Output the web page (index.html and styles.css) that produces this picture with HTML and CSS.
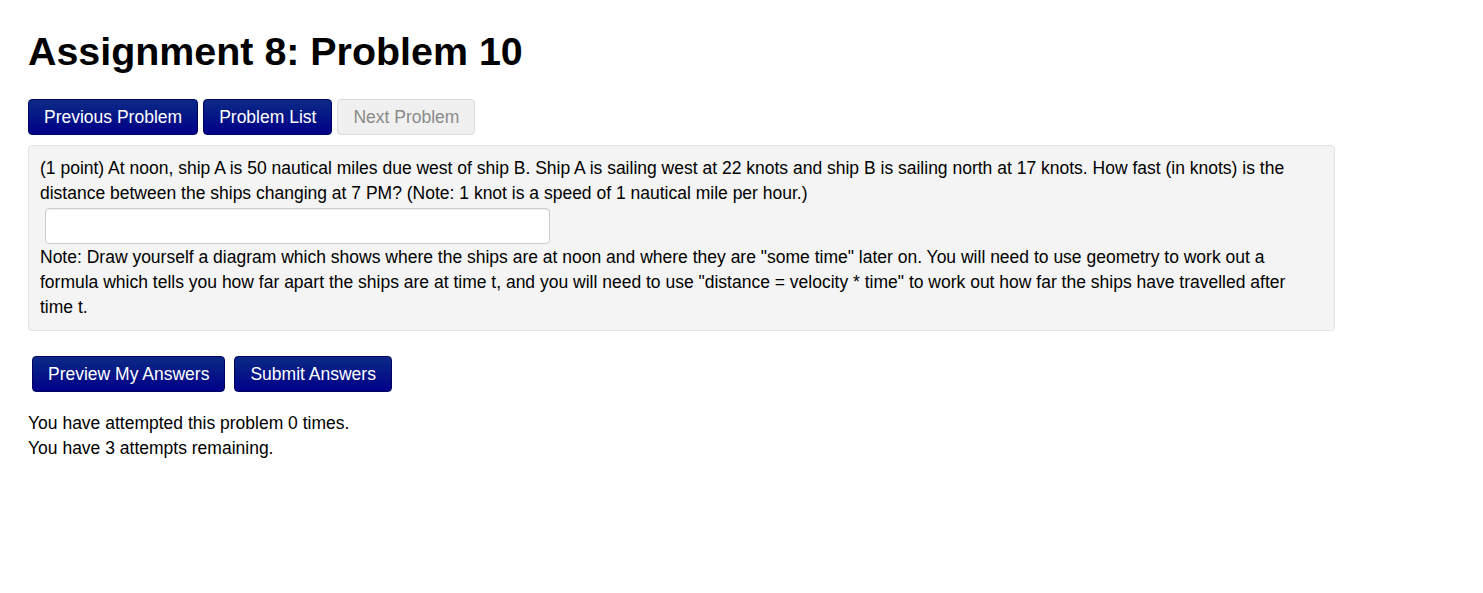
FILE: index.html
```html
<!DOCTYPE html>
<html>
<head>
<meta charset="utf-8">
<link rel="stylesheet" href="styles.css">
</head>
<body>
<div class="page">
  <h1 class="title">Assignment 8: Problem 10</h1>
  <div class="nav">
    <span class="btn btn-primary">Previous Problem</span>
    <span class="btn btn-primary">Problem List</span>
    <span class="btn btn-disabled">Next Problem</span>
  </div>
  <div class="problem">
    <div class="text">(1 point) At noon, ship A is 50 nautical miles due west of ship B. Ship A is sailing west at 22 knots and ship B is sailing north at 17 knots. How fast (in knots) is the distance between the ships changing at 7 PM? (Note: 1 knot is a speed of 1 nautical mile per hour.)</div>
    <div class="answer-row"><input class="answer" type="text"></div>
    <div class="text">Note: Draw yourself a diagram which shows where the ships are at noon and where they are "some time" later on. You will need to use geometry to work out a formula which tells you how far apart the ships are at time t, and you will need to use "distance = velocity * time" to work out how far the ships have travelled after time t.</div>
  </div>
  <div class="submit">
    <span class="btn btn-primary">Preview My Answers</span>
    <span class="btn btn-primary">Submit Answers</span>
  </div>
  <div class="attempts">
    <div>You have attempted this problem 0 times.</div>
    <div>You have 3 attempts remaining.</div>
  </div>
</div>
</body>
</html>
```
FILE: styles.css
```css
html, body {
  margin: 0;
  padding: 0;
  background: #fff;
}
body {
  font-family: "Liberation Sans", Arial, sans-serif;
  font-size: 17.5px;
  color: #000;
}
.page {
  padding: 0 28px;
}
.title {
  margin: 0;
  padding-top: 29px;
  font-size: 39.4px;
  line-height: 44px;
  font-weight: bold;
}
.nav {
  display: flex;
  gap: 5px;
  margin-top: 26px;
}
.btn {
  display: inline-flex;
  align-items: center;
  justify-content: center;
  box-sizing: border-box;
  height: 36px;
  padding: 0 15px;
  font-size: 17.5px;
  border-radius: 4px;
  white-space: nowrap;
}
.btn-primary {
  color: #fff;
  background: linear-gradient(#0b2a86, #000088);
  border: 1px solid #00005e;
}
.btn-disabled {
  color: #8a8a8a;
  background: #f0f0f0;
  border: 1px solid #dcdcdc;
}
.problem {
  margin-top: 10px;
  width: 1307px;
  box-sizing: border-box;
  background: #f4f4f4;
  border: 1px solid #e3e3e3;
  border-radius: 4px;
  padding: 10px 40px 10px 11px;
  font-size: 17.5px;
  line-height: 25px;
}
.answer-row {
  padding: 2px 0 1px 5px;
  line-height: 0;
}
.answer {
  box-sizing: border-box;
  width: 505px;
  height: 36px;
  margin: 0;
  border: 1px solid #cccccc;
  border-radius: 4px;
  background: #fff;
  box-shadow: inset 0 1px 1px rgba(0,0,0,0.075);
}
.submit {
  display: flex;
  gap: 9px;
  margin-top: 25px;
  padding-left: 4px;
}
.attempts {
  margin-top: 19px;
  font-size: 17.5px;
  line-height: 25px;
}
```
